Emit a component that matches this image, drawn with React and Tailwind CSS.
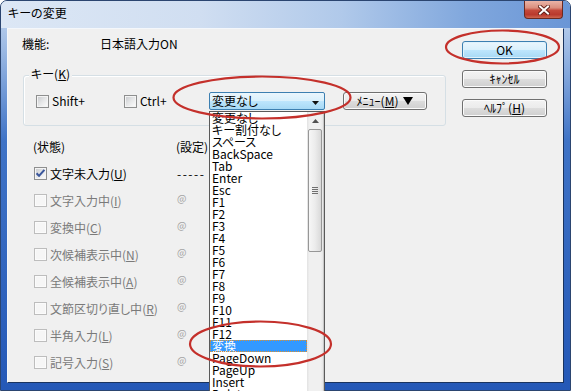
import React from "react";

const U = ({ children }) => (
  <span className="underline underline-offset-[1px]">{children}</span>
);

function Box({ checked = false, disabled = false }) {
  return (
    <span
      className={
        "relative block w-[13px] h-[13px] shrink-0 border p-[1px] " +
        (disabled ? "border-[#bdbdbd] bg-[#fbfbfb]" : "border-[#8e8f8f] bg-[#f4f4f4]")
      }
    >
      <span
        className={
          "block w-full h-full " +
          (disabled
            ? "bg-[#f6f6f6]"
            : "bg-[linear-gradient(135deg,#cbcdd0_0%,#e6e7e8_50%,#fafafa_100%)]")
        }
      />
      {checked && (
        <svg className="absolute left-0 top-0" width="11" height="11" viewBox="0 0 11 11">
          <path d="M1.6 5.2 L4 7.9 L9.4 1.9" fill="none" stroke="#3b579c" strokeWidth="2.1" strokeLinejoin="round" />
        </svg>
      )}
    </span>
  );
}

const btnGray =
  "h-[18px] flex items-center justify-center border border-[#707070] rounded-[3px] bg-[linear-gradient(to_bottom,#f3f3f3_0%,#ebebeb_50%,#dddddd_50%,#cfcfcf_100%)] shadow-[inset_0_0_0_1px_#fbfbfb]";
const btnBlue =
  "h-[18px] flex items-center justify-center border border-[#3c7fb1] rounded-[3px] bg-[linear-gradient(to_bottom,#eaf6fd_0%,#d9f0fc_50%,#bee6fd_50%,#a7d9f5_100%)] shadow-[inset_0_0_0_1px_#dff2fc]";

const items = [
  "変更なし", "キー割付なし", "スペース", "BackSpace", "Tab", "Enter", "Esc",
  "F1", "F2", "F3", "F4", "F5", "F6", "F7", "F8", "F9", "F10", "F11", "F12",
  "変換", "PageDown", "PageUp", "Insert", "Delete", "Home", "End",
];

const rows = [
  { label: "文字未入力", key: "U", checked: true, enabled: true },
  { label: "文字入力中", key: "I" },
  { label: "変換中", key: "C" },
  { label: "次候補表示中", key: "N" },
  { label: "全候補表示中", key: "A" },
  { label: "文節区切り直し中", key: "R" },
  { label: "半角入力", key: "L" },
  { label: "記号入力", key: "S" },
];

function DropList() {
  return (
    <div className="absolute left-[-1px] top-[18px] z-10 w-[116px] h-[300px] bg-white border border-[#5a5a5a] flex">
      <div className="w-[97px] flex flex-col">
        {items.map((t) => (
          <div
            key={t}
            className={
              "h-[12px] leading-[12px] pl-[2px] whitespace-nowrap text-[12px] " +
              (t === "変換"
                ? "bg-[#3399ff] text-white outline outline-1 outline-dotted outline-[#e0902a] -outline-offset-1"
                : "text-black")
            }
          >
            {t}
          </div>
        ))}
      </div>
      <div className="w-[17px] h-full flex flex-col bg-[linear-gradient(to_right,#e2e2e2_0%,#f0f0f0_15%,#f0f0f0_85%,#e6e6e6_100%)] border-r border-[#c8c8c8]">
        <div className="h-[17px] flex items-center justify-center">
          <svg width="7" height="4" viewBox="0 0 7 4">
            <path d="M0 4 L3.5 0 L7 4 Z" fill="#505050" />
          </svg>
        </div>
        <div className="mx-[1px] h-[123px] rounded-[2px] border border-[#979797] bg-[linear-gradient(to_right,#f6f6f6_0%,#ececec_50%,#d9d9d9_100%)] flex items-center justify-center">
          <div className="flex flex-col gap-[1px]">
            <div className="w-[6px] h-[1px] bg-[#6f6f6f]" />
            <div className="w-[6px] h-[1px] bg-[#6f6f6f]" />
            <div className="w-[6px] h-[1px] bg-[#6f6f6f]" />
            <div className="w-[6px] h-[1px] bg-[#6f6f6f]" />
          </div>
        </div>
      </div>
    </div>
  );
}

function Close() {
  return (
    <div className="w-[39px] h-[18px] flex items-center justify-center border border-t-0 border-[#6a2a21] rounded-b-[4px] bg-[linear-gradient(to_bottom,#eab4a7_0%,#da8e7e_40%,#c4493b_55%,#b9392d_80%,#cd6650_100%)]">
      <svg width="12" height="10" viewBox="0 0 12 10">
        <path d="M2 1.5 L10 8.5 M10 1.5 L2 8.5" stroke="#5c1d15" strokeWidth="3.8" strokeLinecap="square" />
        <path d="M2 1.5 L10 8.5 M10 1.5 L2 8.5" stroke="#ffffff" strokeWidth="2" strokeLinecap="square" />
      </svg>
    </div>
  );
}

export default function App() {
  return (
    <div className="relative w-[571px] h-[391px] overflow-hidden bg-white font-['Noto_Sans_CJK_JP',sans-serif] [font-feature-settings:'palt'] text-[12px] leading-[16px] text-black">
      <div className="w-full h-full flex flex-col rounded-t-[7px] border border-[#2b4570] bg-[linear-gradient(to_bottom,#c6d8f0_0px,#9ab8e3_50px,#3f73c6_140px,#2458b7_100%)]">
        {/* title bar */}
        <div className="h-[27px] shrink-0 flex justify-between pl-[7px] pr-[7px] rounded-t-[6px] bg-[linear-gradient(to_right,#dce7f5_0%,#d0def1_35%,#b0c9ea_60%,#80a7dd_82%,#6a96d6_100%)]">
          <span className="mt-[4px]">キーの変更</span>
          <Close />
        </div>
        <div className="flex-1 flex px-[6px] pb-[7px]">
          <div className="flex-1 flex bg-[#f0f0f0] border border-t-[#f4f7fb] border-l-[#f4f7fb] border-r-[#19335f] border-b-[#19335f]">
            {/* left column */}
            <div className="flex-1 pl-[14px] pt-[7px]">
              <div className="flex">
                <span className="w-[78px]">機能:</span>
                <span>日本語入力ON</span>
              </div>
              <div className="relative ml-[1px] mt-[23px] w-[423px] h-[51px] border border-[#d5dfe5] rounded-[3px] shadow-[inset_1px_1px_0_#ffffff]">
                <span className="absolute left-[5px] -top-[10px] px-[2px] bg-[#f0f0f0]">
                  キー(<U>K</U>)
                </span>
                <div className="mt-[16px] pl-[12px] h-[18px] flex items-center">
                  <div className="w-[88px] flex items-center">
                    <Box />
                    <span className="ml-[3px]">Shift+</span>
                  </div>
                  <div className="w-[85px] flex items-center">
                    <Box />
                    <span className="ml-[3px]">Ctrl+</span>
                  </div>
                  <div className="relative w-[116px] h-[18px] flex items-center pl-[2px] border border-[#3c7fb1] rounded-[2px] bg-[linear-gradient(to_bottom,#eaf6fd_0%,#d9f0fc_50%,#bee6fd_50%,#a7d9f5_100%)]">
                    <span>変更なし</span>
                    <svg className="absolute right-[5px] top-[8px]" width="7" height="4" viewBox="0 0 7 4">
                      <path d="M0 0 L7 0 L3.5 4 Z" fill="#111" />
                    </svg>
                    <DropList />
                  </div>
                  <div className={btnGray + " ml-[18px] w-[84px]"}>
                    <span>ﾒﾆｭｰ(<U>M</U>)</span>
                    <svg className="ml-[5px]" width="10" height="8" viewBox="0 0 10 8">
                      <path d="M0 0 L10 0 L5 8 Z" fill="#000" />
                    </svg>
                  </div>
                </div>
              </div>
              <div className="mt-[7px]">
                <div className="h-[27px] flex items-center">
                  <span className="ml-[11px] w-[143px]">(状態)</span>
                  <span>(設定)</span>
                </div>
                {rows.map((r) => (
                  <div key={r.key} className="h-[27px] flex items-center">
                    <div className="w-[154px] pl-[12px] flex items-center">
                      <Box checked={r.checked} disabled={!r.enabled} />
                      <span className={"ml-[3px] " + (r.enabled ? "text-black" : "text-[#7a7a7a]")}>
                        {r.label}(<U>{r.key}</U>)
                      </span>
                    </div>
                    {r.enabled ? (
                      <span className="ml-[1px] tracking-[1.5px]">-----</span>
                    ) : (
                      <span className="ml-[1px] relative -top-[3px] text-[10px] text-[#a3a3a3]">@</span>
                    )}
                  </div>
                ))}
              </div>
            </div>
            {/* right column */}
            <div className="w-[85px] mr-[16px] mt-[12px] flex flex-col gap-[11px]">
              <div className={btnBlue}>OK</div>
              <div className={btnGray}>ｷｬﾝｾﾙ</div>
              <div className={btnGray}>
                <span>ﾍﾙﾌﾟ(<U>H</U>)</span>
              </div>
            </div>
          </div>
        </div>
      </div>
      <svg className="absolute inset-0 z-20 pointer-events-none" width="571" height="391" viewBox="0 0 571 391">
        <ellipse cx="502.5" cy="47" rx="56.5" ry="16.5" fill="none" stroke="#c4302b" strokeWidth="2.2" />
        <ellipse cx="262" cy="97.5" rx="88.5" ry="21" fill="none" stroke="#c4302b" strokeWidth="2.2" />
        <ellipse cx="260.5" cy="344" rx="70.5" ry="22.5" fill="none" stroke="#c4302b" strokeWidth="2.2" />
      </svg>
    </div>
  );
}
